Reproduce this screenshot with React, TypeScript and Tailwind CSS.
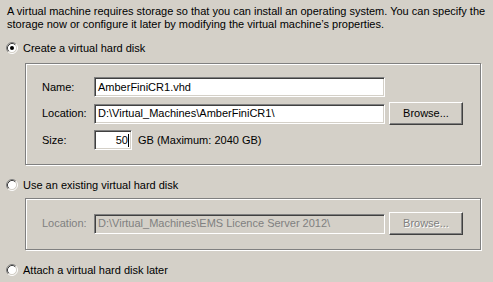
import React from 'react';

const Radio = ({ checked }: { checked?: boolean }) => (
  <svg width="12" height="12" viewBox="0 0 12 12" className="shrink-0">
    <circle cx="6" cy="6" r="4.5" fill="#fff" />
    <path d="M2.11 9.89 A5.5 5.5 0 0 1 9.89 2.11" fill="none" stroke="#808080" />
    <path d="M9.89 2.11 A5.5 5.5 0 0 1 2.11 9.89" fill="none" stroke="#ffffff" />
    <path d="M2.82 9.18 A4.5 4.5 0 0 1 9.18 2.82" fill="none" stroke="#404040" />
    <path d="M9.18 2.82 A4.5 4.5 0 0 1 2.82 9.18" fill="none" stroke="#d4d0c8" />
    {checked && <circle cx="6" cy="6" r="2" fill="#000" />}
  </svg>
);

const TextBox = ({
  children,
  disabled,
  className,
}: {
  children: React.ReactNode;
  disabled?: boolean;
  className?: string;
}) => (
  <div
    className={
      'h-[20px] flex items-center px-[3px] border border-t-[#808080] border-l-[#808080] border-b-white border-r-white shadow-[inset_1px_1px_0_#404040,inset_-1px_-1px_0_#d4d0c8] whitespace-nowrap overflow-hidden ' +
      (disabled ? 'bg-[#d4d0c8] text-[#808080] ' : 'bg-white text-black ') +
      (className ?? '')
    }
  >
    {children}
  </div>
);

const Button = ({ label, disabled }: { label: string; disabled?: boolean }) => (
  <div
    className={
      'w-[74px] h-[23px] flex items-center justify-center border border-t-white border-l-white border-b-[#404040] border-r-[#404040] shadow-[inset_-1px_-1px_0_#808080] ' +
      (disabled ? 'text-[#808080] [text-shadow:1px_1px_0_#fff]' : 'text-black')
    }
  >
    {label}
  </div>
);

const GroupBox = ({ children, className }: { children: React.ReactNode; className?: string }) => (
  <div
    className={
      'ml-[18px] w-[456px] border border-[#808080] shadow-[inset_1px_1px_0_#fff,1px_1px_0_#fff] pl-[16px] flex flex-col ' +
      (className ?? '')
    }
  >
    {children}
  </div>
);

export default function App() {
  return (
    <div className="w-[493px] h-[282px] bg-[#d4d0c8] overflow-hidden text-[11px] leading-[13px] text-black font-['Liberation_Sans',Arial,sans-serif] pl-[7px] pt-[5px]">
      <p className="w-[484px]">
        A virtual machine requires storage so that you can install an operating system. You can specify the
        storage now or configure it later by modifying the virtual machine’s properties.
      </p>

      <div className="mt-[11px] h-[12px] flex items-center gap-[5px] -ml-[1px]">
        <Radio checked />
        <span>Create a virtual hard disk</span>
      </div>

      <GroupBox className="mt-[9px] h-[102px] pt-[13px]">
        <div className="flex items-center h-[20px]">
          <span className="w-[52px]">Name:</span>
          <TextBox className="w-[291px]">AmberFiniCR1.vhd</TextBox>
        </div>
        <div className="flex items-center h-[23px] mt-[5px]">
          <span className="w-[52px]">Location:</span>
          <TextBox className="w-[291px]">D:\Virtual_Machines\AmberFiniCR1\</TextBox>
          <div className="ml-[4px]">
            <Button label="Browse..." />
          </div>
        </div>
        <div className="flex items-center h-[20px] mt-[5px]">
          <span className="w-[52px]">Size:</span>
          <TextBox className="w-[38px] justify-end pr-[2px]">
            <span>50</span>
            <span className="w-px h-[13px] bg-black" />
          </TextBox>
          <span className="ml-[6px]">GB (Maximum: 2040 GB)</span>
        </div>
      </GroupBox>

      <div className="mt-[14px] h-[12px] flex items-center gap-[5px] -ml-[1px]">
        <Radio />
        <span>Use an existing virtual hard disk</span>
      </div>

      <GroupBox className="mt-[7px] h-[52px] pt-[13px]">
        <div className="flex items-center h-[23px] text-[#808080]">
          <span className="w-[52px]">Location:</span>
          <TextBox disabled className="w-[291px]">D:\Virtual_Machines\EMS Licence Server 2012\</TextBox>
          <div className="ml-[4px]">
            <Button label="Browse..." disabled />
          </div>
        </div>
      </GroupBox>

      <div className="mt-[14px] h-[12px] flex items-center gap-[5px] -ml-[1px]">
        <Radio />
        <span>Attach a virtual hard disk later</span>
      </div>
    </div>
  );
}
